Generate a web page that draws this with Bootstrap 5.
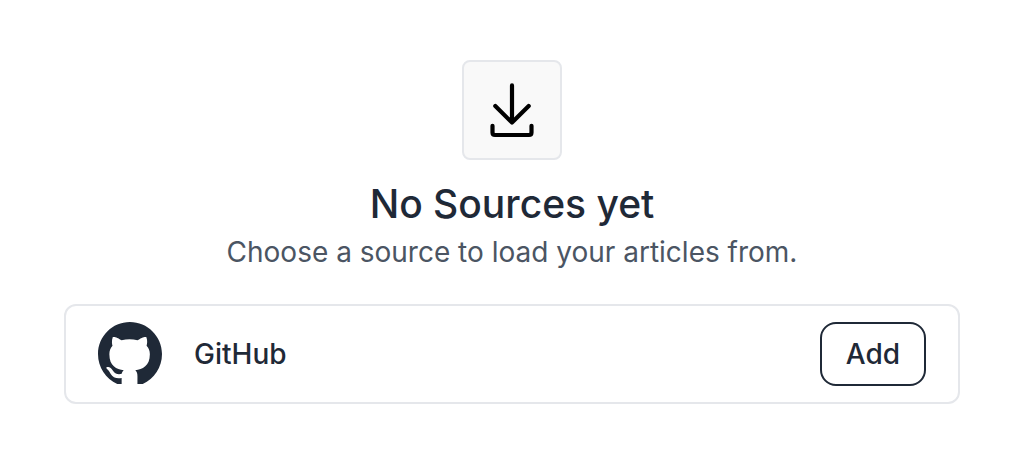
<!DOCTYPE html>
<html lang="en">
<head>
<meta charset="utf-8">
<meta name="viewport" content="width=device-width, initial-scale=1">
<title>Sources</title>
<link href="https://cdn.jsdelivr.net/npm/bootstrap@5.3.0/dist/css/bootstrap.min.css" rel="stylesheet">
<style>
body { font-family: Inter, "Liberation Sans", sans-serif; color: #1f2937; background: #fff; }
.page { padding: 60px 62px 56px 64px; }
.icon-tile { width: 100px; height: 100px; background: #f9f9f9; border: 2px solid #e5e7eb; border-radius: 8px; color: #000; }
.empty-title { font-size: 39px; line-height: 48px; font-weight: 500; margin-top: 20px; }
.empty-text { font-size: 28px; line-height: 40px; color: #4b5563; margin-top: 4px; }
.source-row { border: 2px solid #e5e7eb; border-radius: 12px; padding: 16px 32px; margin-top: 32px; }
.source-name { font-size: 28px; line-height: 40px; font-weight: 500; }
.btn-add { --bs-btn-color: #1f2937; --bs-btn-border-color: #1f2937; --bs-btn-hover-color: #fff; --bs-btn-hover-bg: #1f2937; --bs-btn-font-size: 28px; --bs-btn-line-height: 40px; --bs-btn-font-weight: 500; --bs-btn-padding-x: 24px; --bs-btn-padding-y: 10px; --bs-btn-border-width: 2px; --bs-btn-border-radius: 16px; }
</style>
</head>
<body>
<main class="page d-flex flex-column align-items-center text-center">
  <div class="icon-tile d-flex align-items-center justify-content-center">
    <svg width="96" height="96" viewBox="0 0 96 96" fill="none" stroke="currentColor" stroke-width="4.2" stroke-linecap="round" stroke-linejoin="round" aria-hidden="true">
      <path d="M48 23.4V60M31.3 44L48 60.6L64.7 44M28.5 63.8V70.6Q28.5 73 31 73H65Q67.5 73 67.5 70.6V63.8"/>
    </svg>
  </div>
  <h1 class="empty-title mb-0">No Sources yet</h1>
  <p class="empty-text mb-0">Choose a source to load your articles from.</p>
  <div class="source-row d-flex align-items-center w-100">
    <svg class="flex-shrink-0" width="64" height="64" viewBox="0 0 98 98" fill="currentColor" aria-hidden="true">
      <path d="M48.9 0C21.8 0 0 22 0 49C0 69.5 12 87 29.5 95H36.2V85.6C29 87.2 22.500 85 19.500 79.500C17.500 75.500 15.500 73 13.500 71.400C11.500 69.500 13.500 68.500 16 68.800C19.500 69.500 21.500 72.500 23.200 75C26.500 80 31.500 80.500 36.300 79.300C36.700 77.500 37.900 75.300 39.400 74C28.500 72.300 17.400 68 17.400 49.500C17.400 44.200 19.200 39.900 22.200 36.400C21.500 34 20.500 28.900 22.700 22.900C22.700 22.900 27 21.700 36.100 28A47 47 0 0 1 60.500 28C69.800 21.700 73.900 22.900 73.900 22.900C76.300 29 75 34 74.400 36.400C77.600 39.900 79.400 44.200 79.400 49.500C79.400 68 68 72.300 57.100 74C59.200 76 60.400 78.500 60.400 82.500V95H68.500C86 87 98 69.500 98 49C98 22 75.800 0 48.900 0z"/>
    </svg>
    <span class="source-name ms-4 ps-2">GitHub</span>
    <button type="button" class="btn btn-add ms-auto">Add</button>
  </div>
</main>
<script src="https://cdn.jsdelivr.net/npm/bootstrap@5.3.0/dist/js/bootstrap.bundle.min.js"></script>
</body>
</html>
